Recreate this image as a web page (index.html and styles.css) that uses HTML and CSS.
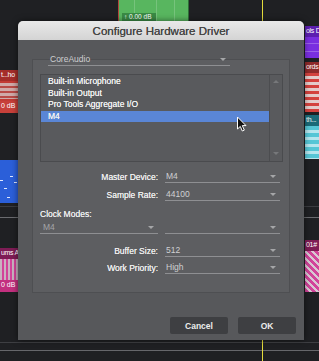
FILE: index.html
```html
<!DOCTYPE html>
<html lang="en">
<head>
    <meta charset="UTF-8">
    <title>Configure Hardware Driver</title>
    <link rel="stylesheet" href="styles.css">
</head>
<body>
    <!-- edit window behind the dialog -->
    <div class="daw">
        <div class="lane a"></div>
        <div class="lane b"></div>
        <div class="lane c"></div>
        <div class="lane d"></div>

        <div class="clip green-top">
            <span class="gain">↑ 0.00 dB</span>
        </div>

        <div class="clip red-left">
            <span class="name">t...ho</span>
            <span class="wave"></span>
            <span class="level">0 dB</span>
        </div>
        <div class="clip blue-left">
            <i class="note n1"></i><i class="note n2"></i><i class="note n3"></i>
            <i class="note n4"></i><i class="note n5"></i>
        </div>
        <div class="clip pink-left">
            <span class="name">ums A</span>
            <span class="wave"></span>
            <span class="level">0 dB</span>
        </div>

        <div class="clip purple-right"><span class="name">ols D</span></div>
        <div class="clip red-right">
            <span class="name">ords</span>
            <span class="wave"></span>
        </div>
        <div class="clip teal-right">
            <span class="name">th...</span>
            <span class="wave"></span>
        </div>
        <div class="clip pink-right">
            <span class="name">01#</span>
            <span class="wave"></span>
        </div>

        <div class="playhead"></div>
    </div>

    <div class="dialog">
        <div class="titlebar">Configure Hardware Driver</div>

        <div class="panel">
            <div class="select driver"><span>CoreAudio</span><i class="caret"></i></div>

            <div class="listbox">
                <ul class="devices">
                    <li>Built-in Microphone</li>
                    <li>Built-in Output</li>
                    <li>Pro Tools Aggregate I/O</li>
                    <li class="selected">M4</li>
                </ul>
                <div class="scrollbar">
                    <i class="arrow up"></i>
                    <i class="arrow down"></i>
                </div>
            </div>

            <div class="field master">
                <label>Master Device:</label>
                <div class="select"><span>M4</span><i class="caret"></i></div>
            </div>
            <div class="field rate">
                <label>Sample Rate:</label>
                <div class="select"><span>44100</span><i class="caret"></i></div>
            </div>

            <div class="clock-label">Clock Modes:</div>
            <div class="field clock">
                <div class="select dim"><span>M4</span><i class="caret"></i></div>
                <div class="select"><span></span><i class="caret"></i></div>
            </div>

            <div class="field buffer">
                <label>Buffer Size:</label>
                <div class="select"><span>512</span><i class="caret"></i></div>
            </div>
            <div class="field priority">
                <label>Work Priority:</label>
                <div class="select"><span>High</span><i class="caret"></i></div>
            </div>
        </div>

        <div class="buttons">
            <button>Cancel</button>
            <button>OK</button>
        </div>
    </div>

    <svg class="cursor" width="12" height="17" viewBox="0 0 12 17">
        <path d="M1.5 1 L1.5 13 L4.3 10.4 L6.3 15 L8.3 14.1 L6.3 9.6 L10 9.6 Z" fill="#111" stroke="#fff" stroke-width="1" stroke-linejoin="round"/>
    </svg>
</body>
</html>
```

FILE: styles.css
```css
* {
    margin: 0;
    padding: 0;
    box-sizing: border-box;
}

body {
    width: 319px;
    height: 361px;
    overflow: hidden;
    position: relative;
    background: #1f2023;
    font-family: "Liberation Sans", Arial, sans-serif;
}

/* ---------- background edit window ---------- */

.daw {
    position: absolute;
    inset: 0;
}

.lane {
    position: absolute;
    left: 0;
    right: 0;
    height: 1px;
}

.lane.a { top: 206px; background: #3b3c40; }
.lane.b { top: 217px; background: #6a6b6f; }
.lane.c { top: 342px; background: #3e3f43; }
.lane.d { top: 350px; background: #66676b; }

.playhead {
    position: absolute;
    left: 262px;
    top: 0;
    bottom: 0;
    width: 1px;
    background: #e4dc3c;
}

.clip {
    position: absolute;
    overflow: hidden;
    display: flex;
    flex-direction: column;
    color: #fff;
    font-size: 7px;
    line-height: 10px;
    white-space: nowrap;
}

.clip .name {
    height: 11px;
    padding-left: 1px;
    letter-spacing: -0.3px;
}

.clip .wave {
    flex: 1;
}

.clip .level {
    height: 12px;
    padding-left: 1px;
}

.green-top {
    left: 118px;
    top: 0;
    width: 71px;
    height: 21px;
    border-left: 1px solid #b0463c;
    border-right: 1px solid #2f6e38;
    background:
        linear-gradient(90deg, transparent 15px, rgba(255,255,255,.18) 15px, rgba(255,255,255,.18) 16px, transparent 16px, transparent 37px, rgba(255,255,255,.18) 37px, rgba(255,255,255,.18) 38px, transparent 38px, transparent 55px, rgba(255,255,255,.18) 55px, rgba(255,255,255,.18) 56px, transparent 56px),
        #58b65f;
}

.green-top .gain {
    margin: 13px 0 0 3px;
    width: 34px;
    height: 8px;
    background: #3a8a45;
    font-size: 6.5px;
    line-height: 8px;
    padding-left: 2px;
}

.red-left {
    left: 0;
    top: 70px;
    width: 18px;
    height: 43px;
    background: #c23a34;
}

.red-left .name { background: #a52d2a; }
.red-left .wave {
    margin: 2px 0;
    background: repeating-linear-gradient(#cfa9a8 0 3px, #b94a46 3px 5px);
}
.red-left .level { background: #c7403a; }

.blue-left {
    left: 0;
    top: 160px;
    width: 18px;
    height: 43px;
    background: #2b5fd9;
}

.note {
    position: absolute;
    height: 1px;
    width: 3px;
    background: #dfe8ff;
}

.n1 { left: 0; top: 20px; }
.n2 { left: 10px; top: 16px; }
.n3 { left: 14px; top: 22px; }
.n4 { left: 4px; top: 28px; }
.n5 { left: 7px; top: 37px; }

.pink-left {
    left: 0;
    top: 248px;
    width: 18px;
    height: 44px;
    background: #c3307f;
}

.pink-left .name { background: #7e1c55; }
.pink-left .wave {
    background: repeating-linear-gradient(90deg, #c9b3c0 0 2px, #d2449a 2px 4px);
}
.pink-left .level { background: #c3307f; }

.purple-right {
    left: 305px;
    top: 26px;
    width: 14px;
    height: 32px;
    background:
        linear-gradient(transparent 17px, rgba(255,255,255,.25) 17px, rgba(255,255,255,.25) 18px, transparent 18px, transparent 25px, rgba(255,255,255,.25) 25px, rgba(255,255,255,.25) 26px, transparent 26px),
        #7a2ee0;
}

.purple-right .name { background: #5d1fb0; }

.red-right {
    left: 305px;
    top: 62px;
    width: 14px;
    height: 50px;
    background: #c23a34;
}

.red-right .name { background: #8e2a2a; }
.red-right .wave {
    background: repeating-linear-gradient(#d4423e 0 3px, #e3cccb 3px 6px);
}

.teal-right {
    left: 305px;
    top: 115px;
    width: 14px;
    height: 44px;
    background: #56c6d6;
}

.teal-right .name { background: #1a6a78; }
.teal-right .wave {
    background: repeating-linear-gradient(#56c6d6 0 4px, #b6e6ee 4px 7px);
}

.pink-right {
    left: 305px;
    top: 240px;
    width: 14px;
    height: 52px;
    background: #c8338a;
}

.pink-right .name { background: #7e1c55; }
.pink-right .wave {
    background: repeating-linear-gradient(45deg, #d2449a 0 3px, #d8c8d2 3px 5px);
}

/* ---------- dialog ---------- */

.dialog {
    position: absolute;
    left: 18px;
    top: 21px;
    width: 286px;
    height: 319px;
    background: #57585b;
    border-radius: 5px 5px 0 0;
    box-shadow: 0 0 6px rgba(0, 0, 0, 0.55);
    display: flex;
    flex-direction: column;
}

.titlebar {
    height: 19px;
    border-radius: 5px 5px 0 0;
    background: linear-gradient(#e9e9e9, #d4d4d4);
    color: #454545;
    font-size: 11.5px;
    line-height: 20px;
    text-align: center;
    text-shadow: 0 0 0.4px #454545;
}

.panel {
    margin: 19px 14px 0;
    border: 1px solid #4e4f52;
    background: #5d5e61;
    padding: 0 6px 18px 7px;
    display: flex;
    flex-direction: column;
}

.select {
    height: 12px;
    border-bottom: 1px solid #8e8f92;
    display: flex;
    align-items: center;
    justify-content: space-between;
    padding: 0 4px 0 1px;
    font-size: 8.5px;
    line-height: 11px;
    color: #cfd0d2;
}

.select.dim {
    color: #a4a5a8;
    padding-left: 3px;
}

.select.driver {
    margin: -6px 0 0 8px;
    width: 182px;
    padding-left: 2px;
}

.caret {
    width: 0;
    height: 0;
    border-left: 3px solid transparent;
    border-right: 3px solid transparent;
    border-top: 3px solid #a5a6a8;
}

.listbox {
    margin-top: 8px;
    height: 88px;
    border: 1px solid #4a4b4e;
    background: #595a5d;
    display: flex;
}

.devices {
    list-style: none;
    flex: 1;
    padding-top: 1px;
}

.devices li {
    height: 11.5px;
    line-height: 11.5px;
    padding-left: 7px;
    font-size: 8.5px;
    color: #f2f2f2;
    text-shadow: 0 0 0.4px #f2f2f2;
}

.devices li.selected {
    background: #5a86d6;
}

.scrollbar {
    width: 13px;
    border-left: 1px solid #4c4d50;
    display: flex;
    flex-direction: column;
    justify-content: space-between;
    align-items: center;
    padding: 5px 0 6px;
}

.arrow {
    width: 0;
    height: 0;
    border-left: 3px solid transparent;
    border-right: 3px solid transparent;
}

.arrow.up { border-bottom: 3px solid #77787b; }
.arrow.down { border-top: 3px solid #77787b; }

.field {
    display: grid;
    grid-template-columns: 118px 115px;
    column-gap: 7px;
    align-items: center;
}

.field label,
.clock-label {
    font-size: 8.5px;
    line-height: 12px;
    color: #eeeeee;
    text-shadow: 0 0 0.4px #eeeeee;
}

.field label {
    text-align: right;
}

.field.master { margin-top: 9px; }
.field.rate { margin-top: 6px; }
.field.clock { margin-top: 2px; }
.field.buffer { margin-top: 11px; }
.field.priority { margin-top: 5px; }

.clock-label {
    margin-top: 7px;
}

.buttons {
    margin: 24px 8px 0 0;
    display: flex;
    justify-content: flex-end;
    gap: 10px;
}

.buttons button {
    width: 58px;
    height: 17px;
    border: none;
    border-radius: 2px;
    background: #3e3f42;
    color: #ececec;
    font: bold 8.5px "Liberation Sans", Arial, sans-serif;
}

.cursor {
    position: absolute;
    left: 236px;
    top: 116px;
}
```
